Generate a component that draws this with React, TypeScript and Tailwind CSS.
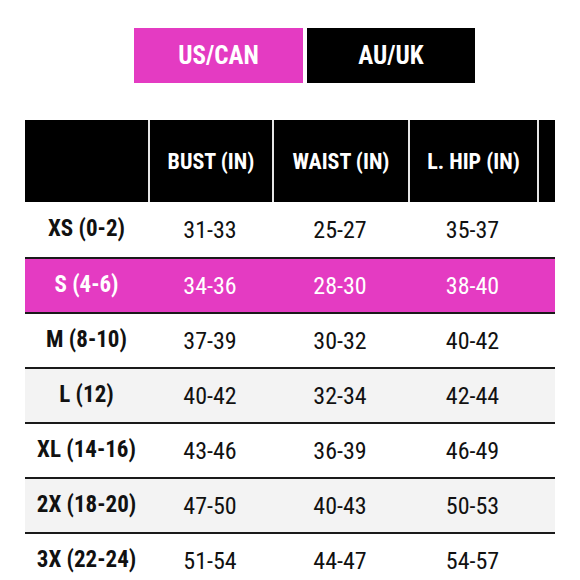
import React from "react"

const narrow = "font-['Roboto_Condensed','Liberation_Sans_Narrow','Roboto',sans-serif] font-stretch-condensed"

type Row = { size: string; bust: string; waist: string; hip: string; tone: "white" | "gray" | "pink" }

const rows: Row[] = [
	{ size: "XS (0-2)", bust: "31-33", waist: "25-27", hip: "35-37", tone: "white" },
	{ size: "S (4-6)", bust: "34-36", waist: "28-30", hip: "38-40", tone: "pink" },
	{ size: "M (8-10)", bust: "37-39", waist: "30-32", hip: "40-42", tone: "white" },
	{ size: "L (12)", bust: "40-42", waist: "32-34", hip: "42-44", tone: "gray" },
	{ size: "XL (14-16)", bust: "43-46", waist: "36-39", hip: "46-49", tone: "white" },
	{ size: "2X (18-20)", bust: "47-50", waist: "40-43", hip: "50-53", tone: "gray" },
	{ size: "3X (22-24)", bust: "51-54", waist: "44-47", hip: "54-57", tone: "white" },
]

const cols = "grid grid-cols-[123px_124px_136px_129px_130px]"

const toneClass = {
	white: "bg-white text-[#111]",
	gray: "bg-[#f3f3f3] text-[#111]",
	pink: "bg-[#e43bc2] text-white",
}

const App: React.FC = () => {
	return (
		<div className={`min-h-[580px] bg-white ${narrow}`}>
			{/* region tabs */}
			<div className="flex gap-[4px] pl-[134px] pt-[28px]">
				<button className="w-[169px] h-[55px] bg-[#e43bc2] text-white text-[25px] font-bold">
					US/CAN
				</button>
				<button className="w-[168px] h-[55px] bg-black text-white text-[25px] font-bold">
					AU/UK
				</button>
			</div>

			{/* size chart */}
			<div className="mt-[37px] ml-[25px] w-[530px] overflow-hidden">
				<div className={`${cols} h-[82px] bg-black text-white text-[22px] font-bold`}>
					<div />
					<div className="flex items-center justify-center border-l-2 border-[#e6e6e6]">BUST (IN)</div>
					<div className="flex items-center justify-center border-l-2 border-[#e6e6e6]">WAIST (IN)</div>
					<div className="flex items-center justify-center border-l-2 border-[#e6e6e6]">L. HIP (IN)</div>
					<div className="border-l-2 border-[#e6e6e6]" />
				</div>
				{rows.map((r, i) => (
					<div
						key={r.size}
						className={`${cols} h-[55px] items-center text-[24px] ${toneClass[r.tone]} ${
							i === 0 ? "" : "border-t-2 border-[#1a1a1a]"
						}`}>
						<div className="text-center font-bold text-[23px]">{r.size}</div>
						<div className="text-center">{r.bust}</div>
						<div className="text-center">{r.waist}</div>
						<div className="text-center">{r.hip}</div>
						<div />
					</div>
				))}
			</div>
		</div>
	)
}

export default App
